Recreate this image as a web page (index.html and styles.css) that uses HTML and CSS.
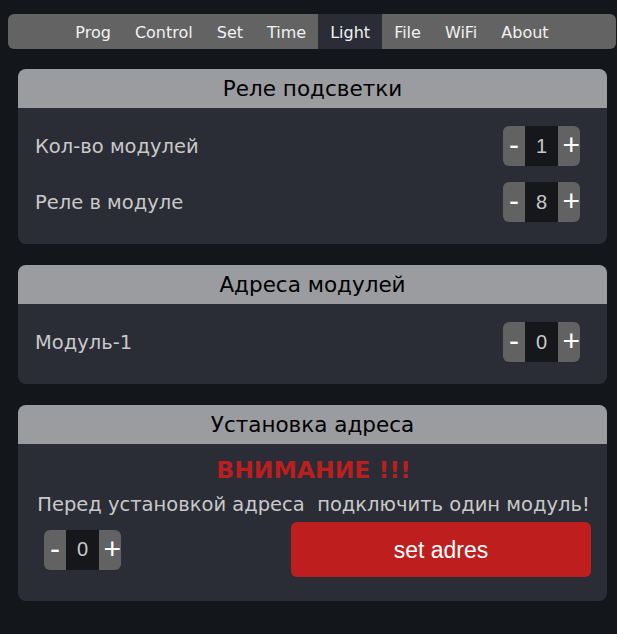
FILE: index.html
```html
<!DOCTYPE html>
<html>
<head>
<meta charset="utf-8">
<link rel="stylesheet" href="styles.css">
</head>
<body>
<nav class="nav">
  <a class="nav-item">Prog</a>
  <a class="nav-item">Control</a>
  <a class="nav-item">Set</a>
  <a class="nav-item">Time</a>
  <a class="nav-item active">Light</a>
  <a class="nav-item">File</a>
  <a class="nav-item">WiFi</a>
  <a class="nav-item">About</a>
</nav>
<main class="main">
  <section class="panel">
    <div class="panel-head">Реле подсветки</div>
    <div class="panel-body">
      <div class="row">
        <span class="label">Кол-во модулей</span>
        <div class="stepper"><span class="st-btn">-</span><span class="st-val">1</span><span class="st-btn plus">+</span></div>
      </div>
      <div class="row">
        <span class="label">Реле в модуле</span>
        <div class="stepper"><span class="st-btn">-</span><span class="st-val">8</span><span class="st-btn plus">+</span></div>
      </div>
    </div>
  </section>
  <section class="panel">
    <div class="panel-head">Адреса модулей</div>
    <div class="panel-body">
      <div class="row">
        <span class="label">Модуль-1</span>
        <div class="stepper"><span class="st-btn">-</span><span class="st-val">0</span><span class="st-btn plus">+</span></div>
      </div>
    </div>
  </section>
  <section class="panel">
    <div class="panel-head">Установка адреса</div>
    <div class="panel-body set-body">
      <div class="warn">ВНИМАНИЕ !!!</div>
      <div class="desc">Перед установкой адреса&nbsp; подключить один модуль!</div>
      <div class="set-row">
        <div class="stepper"><span class="st-btn">-</span><span class="st-val">0</span><span class="st-btn plus">+</span></div>
        <button class="set-btn">set adres</button>
      </div>
    </div>
  </section>
</main>
</body>
</html>
```
FILE: styles.css
```css
html, body {
  margin: 0;
  padding: 0;
  background: #13161b;
  font-family: "DejaVu Sans", sans-serif;
}
.nav {
  margin: 14px 1px 0 8px;
  height: 35px;
  display: flex;
  justify-content: center;
  background: #636363;
  border-radius: 6px;
  overflow: hidden;
}
.nav-item {
  padding: 2px 12px 0;
  line-height: 33px;
  font-size: 16px;
  color: #f2f2f2;
}
.nav-item.active {
  background: #2a2d36;
}
.main {
  padding: 20px 10px 0 18px;
  display: flex;
  flex-direction: column;
  gap: 21px;
}
.panel {
  background: #2a2d36;
  border-radius: 8px;
  overflow: hidden;
}
.panel-head {
  height: 39px;
  line-height: 40px;
  background: #9b9ca0;
  color: #000;
  text-align: center;
  font-size: 21.5px;
}
.panel-body {
  padding: 18px 27px 22px 17px;
  display: flex;
  flex-direction: column;
  gap: 16px;
}
.row {
  display: flex;
  justify-content: space-between;
  align-items: center;
  height: 40px;
}
.label {
  color: #c9c9c9;
  font-size: 19.5px;
}
.stepper {
  display: flex;
  height: 40px;
  border-radius: 6px;
  overflow: hidden;
}
.st-btn {
  width: 22px;
  background: #626262;
  color: #fff;
  font-family: "Liberation Sans", Arial, sans-serif;
  font-size: 30px;
  display: flex;
  align-items: center;
  justify-content: center;
  padding-bottom: 2px;
  box-sizing: border-box;
}
.st-btn.plus {
  justify-content: flex-end;
}
.st-val {
  width: 33px;
  background: #15171b;
  color: #c9c9c9;
  font-family: "Liberation Sans", Arial, sans-serif;
  font-size: 20px;
  display: flex;
  align-items: center;
  justify-content: center;
}
.set-body {
  padding: 12px 16px 24px 18px;
  gap: 0;
}
.warn {
  text-align: center;
  color: #bb1e1e;
  font-weight: bold;
  font-size: 23.5px;
  line-height: 28px;
}
.desc {
  text-align: center;
  color: #c9c9c9;
  font-size: 19.5px;
  line-height: 24px;
  margin-top: 9px;
}
.set-row {
  margin-top: 5px;
  display: flex;
  justify-content: space-between;
  align-items: center;
  padding-left: 8px;
}
.set-btn {
  width: 300px;
  height: 55px;
  border: none;
  border-radius: 6px;
  background: #be1e1e;
  color: #fff;
  font-family: "Liberation Sans", Arial, sans-serif;
  font-size: 23px;
  padding-top: 2px;
}
```
